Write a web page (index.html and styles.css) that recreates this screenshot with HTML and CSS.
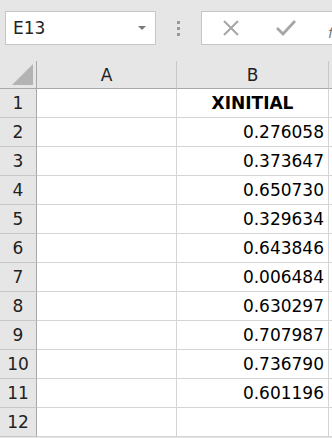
FILE: index.html
```html
<!DOCTYPE html>
<html lang="en">
<head>
    <meta charset="UTF-8">
    <meta name="viewport" content="width=device-width, initial-scale=1.0">
    <title>Sheet</title>
    <link rel="stylesheet" href="styles.css">
</head>
<body>
    <div class="toolbar">
        <div class="name-box">
            <span>E13</span>
            <span class="drop"></span>
        </div>
        <div class="grip">
            <span></span><span></span><span></span>
        </div>
        <div class="formula-box">
            <svg class="icon" width="18" height="18" viewBox="0 0 18 18">
                <path d="M2 2 L16 16 M16 2 L2 16" stroke="#a6a6a6" stroke-width="2" fill="none"/>
            </svg>
            <svg class="icon check" width="20" height="18" viewBox="0 0 20 18">
                <path d="M1 9 L7 15 L19 2" stroke="#a6a6a6" stroke-width="2.8" fill="none"/>
            </svg>
            <span class="fx">f</span>
        </div>
    </div>

    <div class="sheet">
        <div class="hd corner"><span class="tri"></span></div>
        <div class="hd col">A</div>
        <div class="hd col">B</div>
        <div class="hd col last"></div>

        <div class="rh">1</div><div class="cell"></div><div class="cell title">XINITIAL</div><div class="cell"></div>
        <div class="rh">2</div><div class="cell"></div><div class="cell num">0.276058</div><div class="cell"></div>
        <div class="rh">3</div><div class="cell"></div><div class="cell num">0.373647</div><div class="cell"></div>
        <div class="rh">4</div><div class="cell"></div><div class="cell num">0.650730</div><div class="cell"></div>
        <div class="rh">5</div><div class="cell"></div><div class="cell num">0.329634</div><div class="cell"></div>
        <div class="rh">6</div><div class="cell"></div><div class="cell num">0.643846</div><div class="cell"></div>
        <div class="rh">7</div><div class="cell"></div><div class="cell num">0.006484</div><div class="cell"></div>
        <div class="rh">8</div><div class="cell"></div><div class="cell num">0.630297</div><div class="cell"></div>
        <div class="rh">9</div><div class="cell"></div><div class="cell num">0.707987</div><div class="cell"></div>
        <div class="rh">10</div><div class="cell"></div><div class="cell num">0.736790</div><div class="cell"></div>
        <div class="rh">11</div><div class="cell"></div><div class="cell num">0.601196</div><div class="cell"></div>
        <div class="rh">12</div><div class="cell"></div><div class="cell"></div><div class="cell"></div>
    </div>
</body>
</html>
```

FILE: styles.css
```css
body {
    margin: 0;
    background-color: #e6e6e6;
    font-family: "DejaVu Sans", sans-serif;
    color: #000;
    overflow: hidden;
}
.toolbar {
    display: flex;
    align-items: center;
    height: 60px;
    padding: 0 0 4px 5px;
    box-sizing: border-box;
}
.name-box {
    display: flex;
    align-items: center;
    justify-content: space-between;
    width: 151px;
    height: 34px;
    box-sizing: border-box;
    padding: 0 9px 0 7px;
    background-color: #fff;
    border: 1px solid #c6c6c6;
    font-size: 17px;
    color: #222;
}
.drop {
    width: 0;
    height: 0;
    border-left: 4px solid transparent;
    border-right: 4px solid transparent;
    border-top: 4px solid #7a7a7a;
}
.grip {
    display: flex;
    flex-direction: column;
    gap: 3px;
    margin: 0 21px 0 21px;
}
.grip span {
    width: 3px;
    height: 3px;
    background-color: #9a9a9a;
}
.formula-box {
    flex: 1;
    display: flex;
    align-items: center;
    height: 34px;
    box-sizing: border-box;
    padding-left: 20px;
    background-color: #fff;
    border: 1px solid #c6c6c6;
    border-right: none;
    overflow: hidden;
}
.icon {
    display: block;
    flex-shrink: 0;
}
.check {
    margin-left: 36px;
}
.fx {
    margin-left: 32px;
    margin-top: 10px;
    font-style: italic;
    color: #777;
    font-size: 14px;
}
.sheet {
    display: grid;
    grid-template-columns: 37px 140px 152px 1fr;
    grid-auto-rows: 29px;
    font-size: 17px;
}
.hd {
    background-color: #e6e6e6;
    border-right: 1px solid #c8c8c8;
    border-bottom: 1px solid #a8a8a8;
    display: flex;
    align-items: center;
    justify-content: center;
    box-sizing: border-box;
    color: #222;
    margin-top: 1px;
    height: 28px;
}
.corner {
    border-right: 1px solid #a8a8a8;
    position: relative;
}
.tri {
    position: absolute;
    right: 3px;
    bottom: 3px;
    width: 0;
    height: 0;
    border-left: 21px solid transparent;
    border-bottom: 21px solid #b3b3b3;
}
.last {
    border-right: none;
}
.rh {
    background-color: #e6e6e6;
    border-right: 1px solid #a8a8a8;
    border-bottom: 1px solid #c8c8c8;
    display: flex;
    align-items: center;
    justify-content: center;
    box-sizing: border-box;
    color: #222;
}
.cell {
    background-color: #fff;
    border-right: 1px solid #d4d4d4;
    border-bottom: 1px solid #d4d4d4;
    box-sizing: border-box;
    display: flex;
    align-items: center;
    padding: 0 4px;
}
.num {
    justify-content: flex-end;
}
.title {
    justify-content: center;
    font-weight: bold;
}
```
